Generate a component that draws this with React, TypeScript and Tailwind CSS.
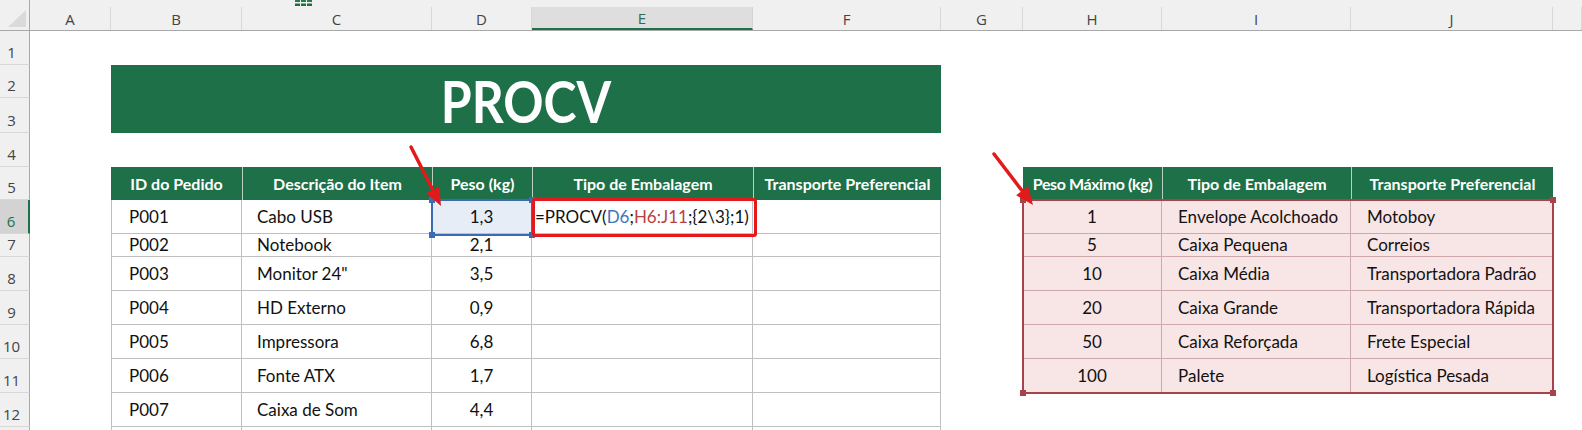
import React from "react";

const colStart = [
  "",
  "col-start-1",
  "col-start-2",
  "col-start-3",
  "col-start-4",
  "col-start-5",
  "col-start-6",
  "col-start-7",
  "col-start-8",
  "col-start-9",
  "col-start-10",
  "col-start-11",
  "col-start-12",
];
const rowStart = [
  "",
  "row-start-1",
  "row-start-2",
  "row-start-3",
  "row-start-4",
  "row-start-5",
  "row-start-6",
  "row-start-7",
  "row-start-8",
  "row-start-9",
  "row-start-10",
  "row-start-11",
  "row-start-12",
  "row-start-13",
  "row-start-14",
];

const letters = ["A", "B", "C", "D", "E", "F", "G", "H", "I", "J", ""];

const orders: [string, string, string][] = [
  ["P001", "Cabo USB", "1,3"],
  ["P002", "Notebook", "2,1"],
  ["P003", 'Monitor 24"', "3,5"],
  ["P004", "HD Externo", "0,9"],
  ["P005", "Impressora", "6,8"],
  ["P006", "Fonte ATX", "1,7"],
  ["P007", "Caixa de Som", "4,4"],
];

const lookup: [string, string, string][] = [
  ["1", "Envelope Acolchoado", "Motoboy"],
  ["5", "Caixa Pequena", "Correios"],
  ["10", "Caixa Média", "Transportadora Padrão"],
  ["20", "Caixa Grande", "Transportadora Rápida"],
  ["50", "Caixa Reforçada", "Frete Especial"],
  ["100", "Palete", "Logística Pesada"],
];

const cellFont = "font-['Lato',sans-serif] text-[17px] text-[#111] whitespace-nowrap";
const hdrFont = "font-['Lato',sans-serif] text-[16px] font-bold text-white whitespace-nowrap";
const GREEN = "bg-[#1d7047]";

function Arrow({ x1, y1, x2, y2 }: { x1: number; y1: number; x2: number; y2: number }) {
  const dx = x2 - x1;
  const dy = y2 - y1;
  const len = Math.sqrt(dx * dx + dy * dy);
  const ux = dx / len;
  const uy = dy / len;
  const hl = 18;
  const hw = 15;
  const bx = x2 - ux * hl;
  const by = y2 - uy * hl;
  const nx = -uy;
  const ny = ux;
  const pts = `${x2},${y2} ${bx + (nx * hw) / 2},${by + (ny * hw) / 2} ${bx - (nx * hw) / 2},${by - (ny * hw) / 2}`;
  return (
    <g>
      <line x1={x1} y1={y1} x2={bx + ux * 2} y2={by + uy * 2} stroke="#e31a1c" strokeWidth={3.5} strokeLinecap="round" />
      <polygon points={pts} fill="#e31a1c" />
    </g>
  );
}

export default function App() {
  const cells: React.ReactNode[] = [];

  // corner
  cells.push(
    <div key="corner" className={`${colStart[1]} ${rowStart[1]} bg-[#f0f0f0] border-b border-b-[#a8a8a8] border-r border-r-[#a8a8a8] relative`}>
      <div className="absolute right-[3px] bottom-[3px] w-0 h-0 border-l-[18px] border-l-transparent border-b-[17px] border-b-[#dadada]" />
    </div>
  );

  // column headers
  letters.forEach((l, i) => {
    const c = i + 2;
    const active = l === "E";
    cells.push(
      <div key={`ch${i}`} className={`${colStart[c]} ${rowStart[1]} bg-[#f0f0f0] border-b border-b-[#a8a8a8] pt-[7px] flex`}>
        <div
          className={`w-full h-full flex items-center justify-center pt-[2px] font-['Open_Sans',sans-serif] text-[15px] ${
            active
              ? "bg-[#dedede] text-[#2f6b47] border-b-2 border-b-[#1d7047] border-r border-r-[#d4d4d4]"
              : "text-[#444] border-r border-r-[#d8d8d8]"
          }`}
        >
          {l}
        </div>
      </div>
    );
  });

  // row headers
  for (let r = 1; r <= 13; r++) {
    const active = r === 6;
    cells.push(
      <div
        key={`rh${r}`}
        className={`${colStart[1]} ${rowStart[r + 1]} flex items-end justify-center pr-[6px] pb-[4px] leading-[16px] font-['Open_Sans',sans-serif] text-[15px] border-b border-b-[#d8d8d8] ${
          active ? "bg-[#d3d3d3] text-[#1d7047] border-r-2 border-r-[#1d7047]" : "bg-[#f0f0f0] text-[#444] border-r border-r-[#a8a8a8]"
        }`}
      >
        {r <= 12 ? r : ""}
      </div>
    );
  }

  // title (B2:F3)
  cells.push(
    <div
      key="title"
      className={`${colStart[3]} col-span-5 ${rowStart[3]} row-span-2 ${GREEN} flex items-center justify-center pt-[4px] font-['Lato',sans-serif] text-[58px] font-bold text-white leading-none`}
    >
      <span className="inline-block scale-x-[0.86]">PROCV</span>
    </div>
  );

  // table 1 header (row 5)
  const h1 = ["ID do Pedido", "Descrição do Item", "Peso (kg)", "Tipo de Embalagem", "Transporte Preferencial"];
  h1.forEach((t, i) => {
    cells.push(
      <div
        key={`h1${i}`}
        className={`${colStart[3 + i]} ${rowStart[6]} ${GREEN} ${hdrFont} flex items-center justify-center ${i > 0 ? "border-l border-l-[#b9cfc2]" : ""}`}
      >
        {t}
      </div>
    );
  });

  // table 1 data
  for (let i = 0; i < 8; i++) {
    const gr = 7 + i;
    const row = orders[i];
    const base = "border-b border-b-[#c0c0c0] border-r border-r-[#c0c0c0] flex items-center";
    cells.push(
      <div key={`b${i}`} className={`${colStart[3]} ${rowStart[gr]} ${base} border-l border-l-[#c0c0c0] pl-[17px] ${cellFont}`}>
        {row ? row[0] : ""}
      </div>
    );
    cells.push(
      <div key={`c${i}`} className={`${colStart[4]} ${rowStart[gr]} ${base} pl-[15px] ${cellFont}`}>
        {row ? row[1] : ""}
      </div>
    );
    cells.push(
      <div key={`d${i}`} className={`${colStart[5]} ${rowStart[gr]} ${base} justify-center ${i === 0 ? "bg-[#e7edf7]" : ""} ${cellFont}`}>
        {row ? row[2] : ""}
      </div>
    );
    cells.push(
      <div key={`e${i}`} className={`${colStart[6]} ${rowStart[gr]} ${base} pl-[3px] ${cellFont}`}>
        {i === 0 ? (
          <span>
            =PROCV(<span className="text-[#3d76b9]">D6</span>;<span className="text-[#b8413f]">H6:J11</span>;{"{2\\3};1)"}
          </span>
        ) : (
          ""
        )}
      </div>
    );
    cells.push(<div key={`f${i}`} className={`${colStart[7]} ${rowStart[gr]} ${base} ${cellFont}`} />);
  }

  // lookup header
  const h2 = ["Peso Máximo (kg)", "Tipo de Embalagem", "Transporte Preferencial"];
  h2.forEach((t, i) => {
    cells.push(
      <div
        key={`h2${i}`}
        className={`${colStart[9 + i]} ${rowStart[6]} ${GREEN} ${hdrFont} flex items-center justify-center ${i > 0 ? "border-l border-l-[#b9cfc2]" : "tracking-[-0.4px]"}`}
      >
        {t}
      </div>
    );
  });

  // lookup data
  lookup.forEach((row, i) => {
    const gr = 7 + i;
    const base = "bg-[#f8e5e6] border-b border-b-[#cda9ab] border-r border-r-[#cda9ab] flex items-center";
    cells.push(
      <div key={`lh${i}`} className={`${colStart[9]} ${rowStart[gr]} ${base} justify-center ${cellFont}`}>
        {row[0]}
      </div>
    );
    cells.push(
      <div key={`li${i}`} className={`${colStart[10]} ${rowStart[gr]} ${base} pl-[16px] ${cellFont}`}>
        {row[1]}
      </div>
    );
    cells.push(
      <div key={`lj${i}`} className={`${colStart[11]} ${rowStart[gr]} ${base} pl-[16px] ${cellFont}`}>
        {row[2]}
      </div>
    );
  });

  return (
    <div className="relative w-[1582px] h-[430px] overflow-hidden bg-white">
      <div className="grid grid-cols-[30px_81px_131px_190px_100px_221px_188px_82px_139px_189px_202px_29px] grid-rows-[31px_34px_33px_35px_34px_33px_34px_23px_34px_34px_34px_34px_34px_34px]">
        {cells}
      </div>

      {/* small green icon at the top */}
      <svg className="absolute left-[294px] top-0" width="20" height="7" viewBox="0 0 20 7">
        <rect x="1" y="0" width="5" height="2" fill="#2b7a4f" />
        <rect x="7" y="0" width="5" height="2" fill="#2b7a4f" />
        <rect x="13" y="0" width="5" height="2" fill="#2b7a4f" />
        <rect x="1" y="3.5" width="5" height="2.5" fill="#1d7047" />
        <rect x="7" y="3.5" width="5" height="2.5" fill="#1d7047" />
        <rect x="13" y="3.5" width="5" height="2.5" fill="#1d7047" />
      </svg>

      {/* D6 reference highlight */}
      <div className="absolute left-[431px] top-[199px] w-[102px] h-[37px] border-2 border-[#3b6bb3]">
        <div className="absolute -left-[4px] -top-[4px] w-[6px] h-[6px] bg-[#3b6bb3]" />
        <div className="absolute -right-[4px] -top-[4px] w-[6px] h-[6px] bg-[#3b6bb3]" />
        <div className="absolute -left-[4px] -bottom-[4px] w-[6px] h-[6px] bg-[#3b6bb3]" />
        <div className="absolute -right-[4px] -bottom-[4px] w-[6px] h-[6px] bg-[#3b6bb3]" />
      </div>

      {/* H6:J11 reference highlight */}
      <div className="absolute left-[1022px] top-[199px] w-[532px] h-[195px] border-2 border-[#a5454b]">
        <div className="absolute -left-[4px] -top-[4px] w-[6px] h-[6px] bg-[#a5454b]" />
        <div className="absolute -right-[4px] -top-[4px] w-[6px] h-[6px] bg-[#a5454b]" />
        <div className="absolute -left-[4px] -bottom-[4px] w-[6px] h-[6px] bg-[#a5454b]" />
        <div className="absolute -right-[4px] -bottom-[4px] w-[6px] h-[6px] bg-[#a5454b]" />
      </div>

      {/* red emphasis box around the formula */}
      <div className="absolute left-[532px] top-[198px] w-[225px] h-[39px] border-[3.5px] border-[#e31a1c] rounded-[3px]" />

      {/* arrows */}
      <svg className="absolute left-0 top-0 pointer-events-none" width="1582" height="430" viewBox="0 0 1582 430">
        <Arrow x1={411} y1={147} x2={441} y2={206} />
        <Arrow x1={994} y1={154} x2={1033} y2={205} />
      </svg>
    </div>
  );
}
